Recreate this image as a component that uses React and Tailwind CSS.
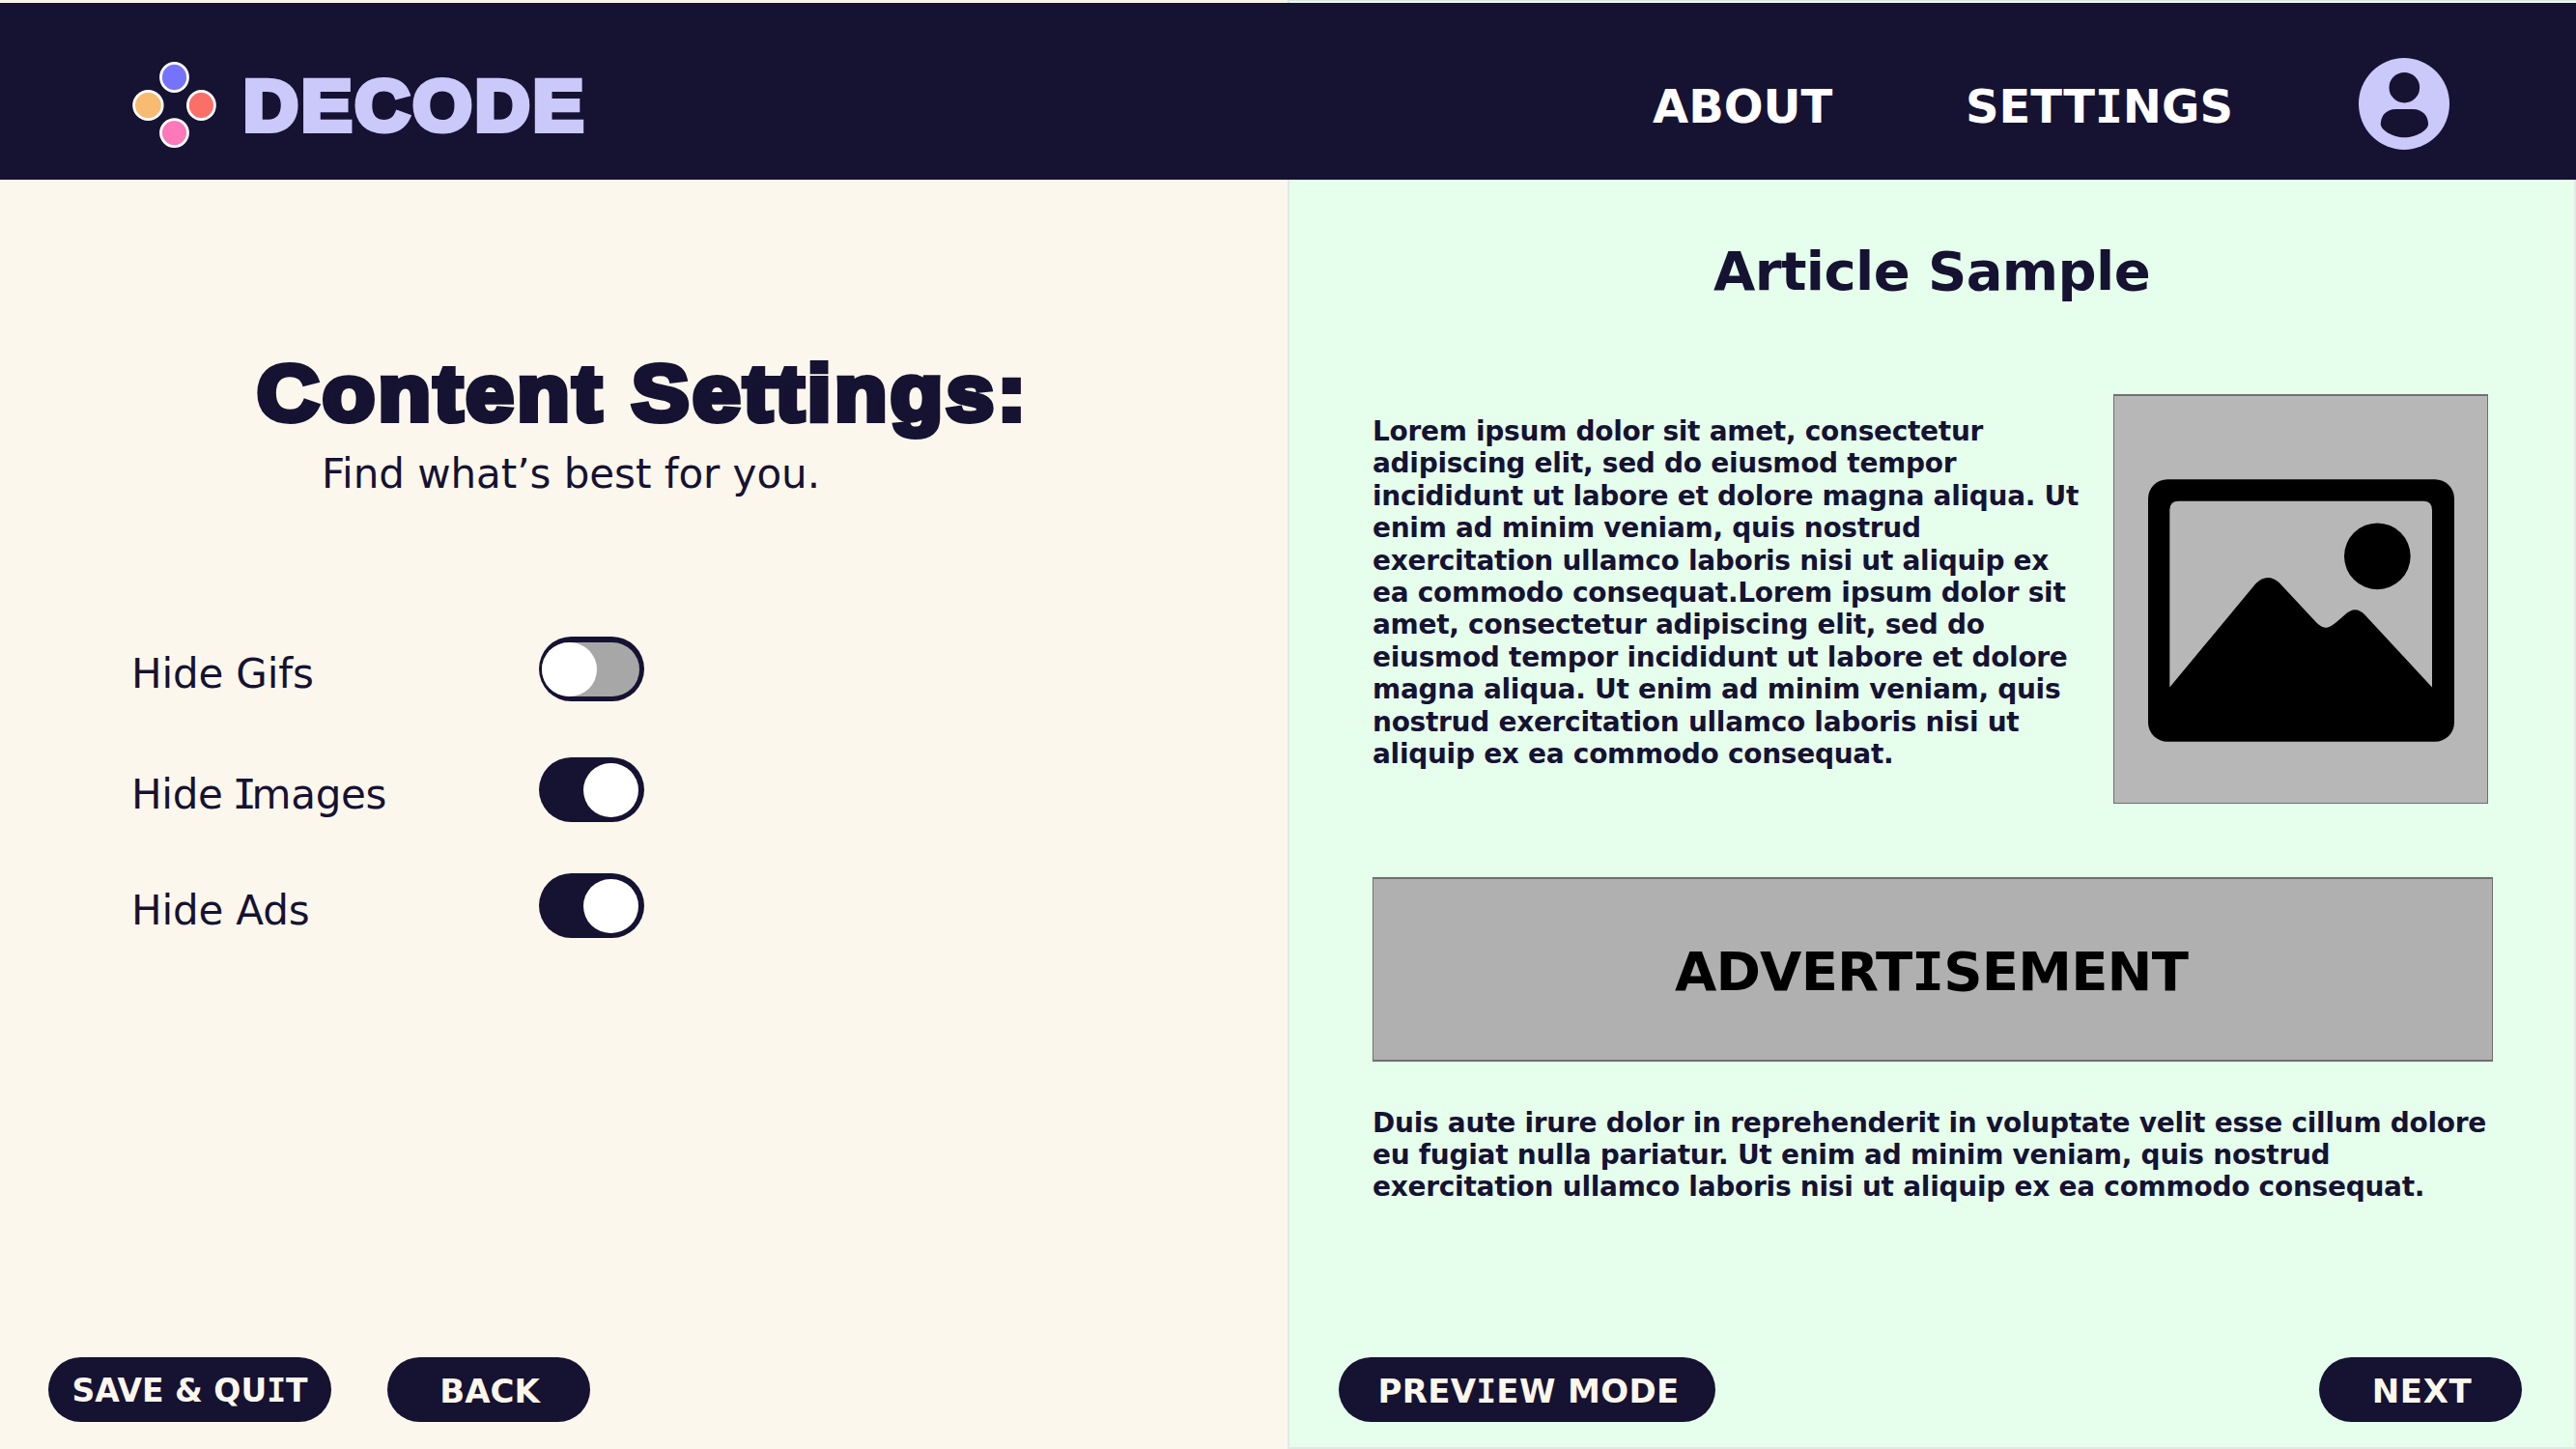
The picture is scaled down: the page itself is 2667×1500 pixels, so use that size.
import React from "react";

// Capital I with serifs, from the monospaced sibling of the interface face.
function SerifI({ className = "" }) {
  return <span className={`font-['DejaVu_Sans_Mono',monospace] ${className}`}>I</span>;
}

function Logo() {
  return (
    <svg className="mt-[60px] h-[91px] w-[88px] shrink-0" viewBox="0 0 88 91" stroke="#fff" strokeWidth="2.8">
      <ellipse cx="43.5" cy="17" rx="14" ry="14.6" fill="#7573fb" />
      <ellipse cx="16.4" cy="46" rx="14.8" ry="14.6" fill="#f9ba72" />
      <ellipse cx="71.4" cy="46" rx="14" ry="14.6" fill="#fb6f69" />
      <ellipse cx="43.5" cy="74.6" rx="14" ry="14" fill="#fd79b9" />
    </svg>
  );
}

function Avatar() {
  return (
    <svg className="mt-[57px] h-[95px] w-[94px] shrink-0" viewBox="0 0 94 95">
      <ellipse cx="47" cy="47.5" rx="47" ry="47.4" fill="#cbc8fa" />
      <circle cx="47.3" cy="30.7" r="15.8" fill="#161232" />
      <path
        d="M38.5 53H56C66 53 72 60 72 68.500C72 74.500 60 82.300 47.300 82.300C35 82.300 22.800 74.500 22.800 68.500C22.800 60 28.500 53 38.500 53Z"
        fill="#161232"
      />
    </svg>
  );
}

function PictureIcon() {
  return (
    <svg className="mt-[86px] ml-[35px] h-[272px] w-[317px]" viewBox="0 0 951 815">
      <rect width="951" height="815" rx="60" />
      <path
        d="M67 646V96Q67 68 95 68H854Q882 68 882 96V646L674 422Q644 389 610 422C565 462 555 472 525 447L406 320Q370 289 334 324Z"
        fill="#b7b7b7"
      />
      <circle cx="712" cy="239" r="103" />
    </svg>
  );
}

function Toggle({ on }) {
  return (
    <div className="flex h-[67px] w-[109px] items-center rounded-full bg-[#161232]">
      {on ? (
        <div className="ml-[46px] h-[56px] w-[57px] rounded-full bg-white" />
      ) : (
        <div className="ml-[3px] h-[56px] w-[101px] rounded-full bg-[#a7a7a7]">
          <div className="h-[56px] w-[57px] rounded-full bg-white" />
        </div>
      )}
    </div>
  );
}

function SettingRow({ children, on }) {
  return (
    <div className="flex h-[67px] pl-[136px]">
      <div className="mt-[18px] w-[422px] text-[42px] leading-[42px] whitespace-nowrap">{children}</div>
      <Toggle on={on} />
    </div>
  );
}

function PillButton({ className, children }) {
  return (
    <button
      className={`flex h-[67px] items-center justify-center rounded-full bg-[#161232] pt-[3px] leading-[34px] font-bold whitespace-nowrap text-[#fcf7ec] ${className}`}
    >
      <span>{children}</span>
    </button>
  );
}

export default function App() {
  return (
    <div className="flex h-[1500px] w-[2667px] flex-col overflow-hidden bg-[#fcf7ec] font-['DejaVu_Sans',sans-serif] text-[#161232]">
      <div className="flex h-[3px] shrink-0">
        <div className="w-[1333px] bg-[#f8f5eb]" />
        <div className="flex-1 border-t border-l-2 border-[#dfe3e4] bg-[#e5ffec]" />
      </div>

      <header className="flex h-[183px] shrink-0 items-start bg-[#161232] pr-[131px] pl-[137px]">
        <Logo />
        <div className="mt-[69px] ml-[27px] origin-left scale-x-[1.06] font-['Liberation_Sans',sans-serif] text-[74px] leading-[76px] font-bold tracking-[3.1px] text-[#cbc8fa] [-webkit-text-stroke:6px_#cbc8fa]">
          DECODE
        </div>
        <nav className="mt-[83px] ml-auto flex text-[48px] leading-[48px] font-bold text-white">
          <a className="w-[324px]">ABOUT</a>
          <a className="w-[407px]">
            SETT
            <SerifI />
            NGS
          </a>
        </nav>
        <Avatar />
      </header>

      <main className="flex min-h-0 flex-1">
        <section className="flex w-[1333px] flex-col pb-[28px]">
          <h1 className="mt-[180px] ml-[266px] origin-left scale-x-[1.1] self-start font-['Liberation_Sans',sans-serif] text-[81px] leading-[82px] font-bold tracking-[3.05px] whitespace-nowrap [-webkit-text-stroke:6px_#161232]">
            Content Settings:
          </h1>
          <p className="mt-[22px] ml-[333px] text-[42px] leading-[42px] tracking-[-0.04px]">Find what’s best for you.</p>

          <div className="mt-[147px]">
            <SettingRow>
              <span className="tracking-[-0.15px]">Hide Gifs</span>
            </SettingRow>
          </div>
          <div className="mt-[58px]">
            <SettingRow on>
              <span className="tracking-[-0.3px]">
                Hide <SerifI className="mr-[-5px] ml-[-3px]" />
                mages
              </span>
            </SettingRow>
          </div>
          <div className="mt-[53px]">
            <SettingRow on>
              <span className="tracking-[-0.15px]">Hide Ads</span>
            </SettingRow>
          </div>

          <div className="mt-auto flex gap-[58px] pl-[50px]">
            <PillButton className="w-[293px] text-[33px]">
              SAVE &amp; QU
              <SerifI />T
            </PillButton>
            <PillButton className="w-[210px] pl-[2px] text-[34px]">BACK</PillButton>
          </div>
        </section>

        <section className="flex flex-1 flex-col border-x-2 border-b-2 border-[#e3e8e4] bg-[#e5ffec] pb-[26px] font-bold">
          <h2 className="mt-[67px] text-center text-[56px] leading-[56px] tracking-[-0.6px]">Article Sample</h2>

          <div className="mt-[99px] flex pl-[86px]">
            <p className="mt-[22px] w-[767px] pr-[28px] text-[28px] leading-[33.4px] tracking-[-0.29px]">
              Lorem ipsum dolor sit amet, consectetur adipiscing elit, sed do eiusmod tempor incididunt ut labore et
              dolore magna aliqua. Ut enim ad minim veniam, quis nostrud exercitation ullamco laboris nisi ut aliquip
              ex ea commodo consequat.Lorem ipsum dolor sit amet, consectetur adipiscing elit, sed do eiusmod tempor
              incididunt ut labore et dolore magna aliqua. Ut enim ad minim veniam, quis nostrud exercitation ullamco
              laboris nisi ut aliquip ex ea commodo consequat.
            </p>
            <div className="h-[424px] w-[388px] border border-t-2 border-[#707070] bg-[#b7b7b7]">
              <PictureIcon />
            </div>
          </div>

          <div className="mt-[76px] ml-[86px] flex h-[191px] w-[1160px] items-center justify-center border border-y-2 border-[#707070] bg-[#b0b0b0] pt-[5px] pr-[3px] text-[56px] leading-[56px] tracking-[-0.8px] text-black">
            <span>
              ADVERT
              <SerifI />
              SEMENT
            </span>
          </div>

          <p className="mt-[47px] ml-[86px] w-[1168px] text-[28px] leading-[33.2px] tracking-[-0.27px]">
            Duis aute irure dolor in reprehenderit in voluptate velit esse cillum dolore eu fugiat nulla pariatur. Ut
            enim ad minim veniam, quis nostrud exercitation ullamco laboris nisi ut aliquip ex ea commodo consequat.
          </p>

          <div className="mt-auto flex justify-between pr-[54px] pl-[51px]">
            <PillButton className="w-[390px] pl-[3px] text-[34px] tracking-[0.35px]">
              PREV
              <SerifI />
              EW MODE
            </PillButton>
            <PillButton className="w-[210px] pl-[3px] text-[34px] tracking-[0.6px]">NEXT</PillButton>
          </div>
        </section>
      </main>
    </div>
  );
}
